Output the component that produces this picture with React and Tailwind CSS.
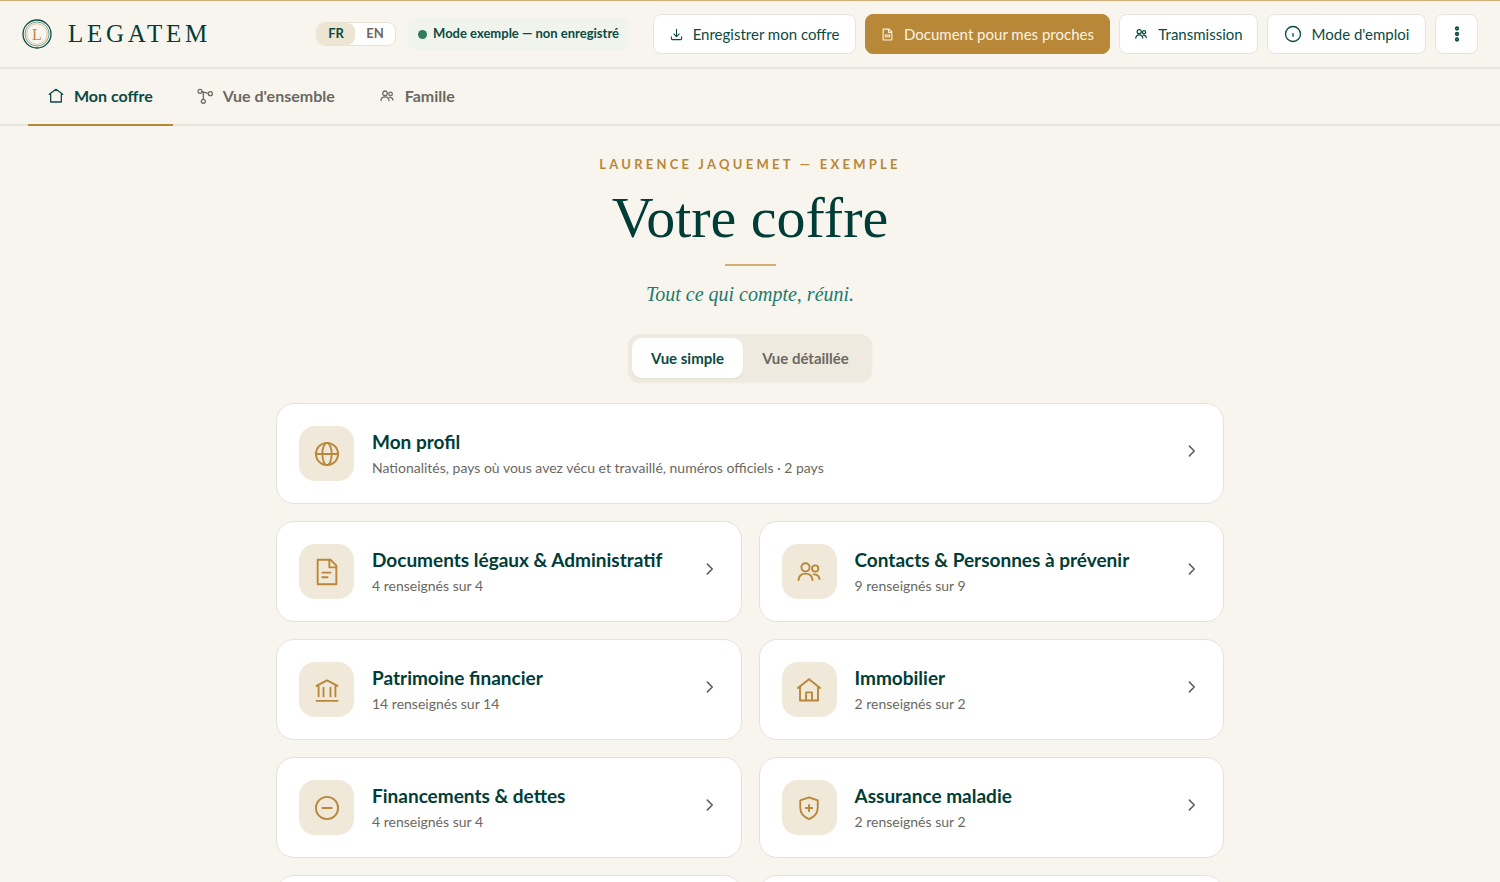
const Svg = ({ size = 28, sw = 1.6, children, className = "" }) => (
  <svg
    width={size}
    height={size}
    viewBox="0 0 24 24"
    fill="none"
    stroke="currentColor"
    strokeWidth={sw}
    strokeLinecap="round"
    strokeLinejoin="round"
    aria-hidden="true"
    className={`shrink-0 ${className}`}
  >
    {children}
  </svg>
);

const Globe = (p) => (
  <Svg {...p}>
    <circle cx="12" cy="12" r="9.5" />
    <ellipse cx="12" cy="12" rx="4" ry="9.5" />
    <path d="M2.5 12h19" />
  </Svg>
);
const Doc = (p) => (
  <Svg {...p}>
    <path d="M4 1.5h11l5 5v16H4z" />
    <path d="M14 1.500v6.500H20M8 12.500h7M8 16.500h4.500" />
  </Svg>
);
const People = (p) => (
  <Svg {...p}>
    <circle cx="9" cy="8" r="3.5" />
    <circle cx="17.3" cy="9" r="2.7" />
    <path d="M3 19c.4-3.8 2.8-5.6 6-5.6s5.6 1.800 6 5.600M16 14c3 0 4.600 1.600 5 4" />
  </Svg>
);
const House = (p) => (
  <Svg {...p}>
    <path d="M2.500 10.300 12 2.800l9.500 7.500M4.300 9V21h15.400V9M9.500 21v-7h5v7" />
  </Svg>
);
const Home = (p) => (
  <Svg {...p}>
    <path d="M2 9.500 12 2l10 7.500h-2V21H4V9.500z" />
  </Svg>
);
const Bank = (p) => (
  <Svg {...p}>
    <path d="M3 8.500 12 3.800l9 4.700M3 8.500h1.500M19.500 8.500H21M4.800 9v8.500M9 10v7.500M15 10v7.500M19.200 9v8.500M3 21.300h18" />
  </Svg>
);
const Minus = (p) => (
  <Svg {...p}>
    <circle cx="12" cy="12" r="9.500" />
    <path d="M8 12h8" />
  </Svg>
);
const Shield = (p) => (
  <Svg {...p}>
    <path d="M12 2.800 19.500 5.500v6c0 4.800-3.200 8.200-7.500 10-4.300-1.800-7.500-5.200-7.500-10v-6z" />
    <path d="M12 9.300v5.400M9.300 12h5.400" />
  </Svg>
);
const Nodes = (p) => (
  <Svg {...p}>
    <circle cx="4.500" cy="5" r="3" />
    <circle cx="20" cy="8.500" r="3" />
    <circle cx="9.500" cy="20" r="3" />
    <path d="M7.500 5.500 17 8M9.500 6.500V17" />
  </Svg>
);
const Download = (p) => (
  <Svg {...p}>
    <path d="M12 2.500v13M7 11l5 5 5-5M2.500 16v3.500a2 2 0 0 0 2 2h15a2 2 0 0 0 2-2V16" />
  </Svg>
);
const Info = (p) => (
  <Svg {...p}>
    <circle cx="12" cy="12" r="10" />
    <path d="M12 11.500v3.500" />
  </Svg>
);
const DocSmall = (p) => (
  <Svg {...p}>
    <path d="M4 2h11l5 5v15H4zM14 2v6h6" />
    <path d="M8 13h8v3H8z" />
  </Svg>
);
const Dots = () => (
  <svg width="16" height="18" viewBox="0 0 16 18" fill="none" stroke="currentColor" strokeWidth="1.700" aria-hidden="true">
    <circle cx="8" cy="3.500" r="1.300" />
    <circle cx="8" cy="9" r="1.300" />
    <circle cx="8" cy="14.500" r="1.300" />
  </svg>
);
const Chevron = () => (
  <Svg size={18} sw={2} className="mb-1.5 text-[#5c5c58]">
    <path d="m8.500 5.500 6.500 6.500-6.500 6.500" />
  </Svg>
);

function Seal() {
  return (
    <svg width="30" height="30" viewBox="0 0 30 30" fill="none" aria-hidden="true" className="shrink-0">
      <circle cx="15" cy="15" r="14" stroke="#0b4a42" strokeWidth="1.300" />
      <circle cx="15" cy="15" r="12" stroke="#5d9a8f" strokeWidth="0.900" />
      <circle cx="15" cy="15" r="10.300" stroke="#d9b98a" strokeWidth="0.800" />
      <text x="15" y="20.500" textAnchor="middle" fontSize="16" fill="#c08a3e" className="font-['Liberation_Serif',serif]">
        L
      </text>
    </svg>
  );
}

const ACTION =
  "flex h-10 items-center justify-center rounded-lg border text-[15px] whitespace-nowrap";
const LIGHT = "border-[#e6e4de] bg-white text-[#0b4a42]";

function Header() {
  return (
    <header className="flex h-[69px] items-center justify-between border-t border-b-2 border-t-[#d2b07a] border-b-[#e8e6e0] px-[22px]">
      <a href="#accueil" className="flex items-center gap-4 text-[#003d36]">
        <Seal />
        <span className="font-['Liberation_Serif',serif] text-[25px] leading-8 tracking-[0.15em]">LEGATEM</span>
      </a>
      <div className="flex items-center">
        <div className="flex h-6 overflow-hidden rounded-lg border border-[#e8e3d6] bg-white text-[13px] font-bold">
          <button type="button" className="w-[38px] rounded-lg bg-[#ece5d2] text-[#0b4a42]">FR</button>
          <button type="button" className="w-10 text-[#6b6862]">EN</button>
        </div>
        <p className="ml-3 flex h-8 items-center gap-1.5 rounded-lg bg-[#f1f4ec] px-2.5 text-[13px] font-bold whitespace-nowrap text-[#0b4a42]">
          <span className="size-[9px] rounded-full bg-[#2f7d5b]" />
          Mode exemple — non enregistré
        </p>
        <div className="ml-6 flex items-center gap-[9px]">
          <button type="button" className={`${ACTION} ${LIGHT} w-[203px] gap-2.5`}>
            <Download size={13} sw={2} />
            Enregistrer mon coffre
          </button>
          <button type="button" className={`${ACTION} w-[245px] gap-2.5 border-[#b88738] bg-[#b88738] text-[#fbf3e2]`}>
            <DocSmall size={13} sw={2} />
            Document pour mes proches
          </button>
          <button type="button" className={`${ACTION} ${LIGHT} w-[139px] gap-2.5`}>
            <People size={14} sw={2.200} />
            Transmission
          </button>
          <button type="button" className={`${ACTION} ${LIGHT} w-[159px] gap-2.5`}>
            <Info size={18} sw={1.800} />
            Mode d'emploi
          </button>
          <button type="button" aria-label="Plus d'options" className={`${ACTION} ${LIGHT} w-[43px]`}>
            <Dots />
          </button>
        </div>
      </div>
    </header>
  );
}

const TABS = [
  { label: "Mon coffre", Icon: Home, active: true },
  { label: "Vue d'ensemble", Icon: Nodes },
  { label: "Famille", Icon: People },
];

function Tabs() {
  return (
    <nav className="flex h-[57px] gap-1 border-b-2 border-[#e8e6e0] px-7">
      {TABS.map(({ label, Icon, active }) => (
        <a
          key={label}
          href={`#${label}`}
          className={`-mb-0.5 flex items-center gap-2.5 border-b-2 px-5 pb-0.5 text-base font-bold ${
            active ? "border-[#b88738] text-[#0b4a42]" : "border-transparent text-[#6b6862]"
          }`}
        >
          <Icon size={16} sw={1.900} />
          {label}
        </a>
      ))}
    </nav>
  );
}

function Card({ Icon, title, text, wide }) {
  return (
    <a
      href={`#${title}`}
      className={`flex h-[101px] items-center gap-[18px] rounded-[18px] border border-[#e4e2dc] bg-white pr-[22px] pl-[22px] ${wide ? "col-span-2" : ""}`}
    >
      <span className="flex size-[55px] shrink-0 items-center justify-center rounded-2xl bg-[#f0e8d8] text-[#b88738]">
        <Icon />
      </span>
      <span className="flex min-w-0 flex-1 flex-col">
        <span className="text-[19px] leading-7 font-bold text-[#003d36]">{title}</span>
        <span className="text-sm leading-6 text-[#6b6862]">{text}</span>
      </span>
      <Chevron />
    </a>
  );
}

const CARDS = [
  { Icon: Globe, title: "Mon profil", text: "Nationalités, pays où vous avez vécu et travaillé, numéros officiels · 2 pays", wide: true },
  { Icon: Doc, title: "Documents légaux & Administratif", text: "4 renseignés sur 4" },
  { Icon: People, title: "Contacts & Personnes à prévenir", text: "9 renseignés sur 9" },
  { Icon: Bank, title: "Patrimoine financier", text: "14 renseignés sur 14" },
  { Icon: House, title: "Immobilier", text: "2 renseignés sur 2" },
  { Icon: Minus, title: "Financements & dettes", text: "4 renseignés sur 4" },
  { Icon: Shield, title: "Assurance maladie", text: "2 renseignés sur 2" },
];

export default function App() {
  return (
    <div className="h-screen overflow-hidden bg-[#f8f5ee] font-[Lato,sans-serif]">
      <Header />
      <Tabs />
      <main className="mx-auto max-w-[948px] pt-7">
        <div className="flex flex-col items-center text-center">
          <p className="text-[13px] leading-5 font-bold tracking-[0.25em] text-[#b88738]">LAURENCE JAQUEMET — EXEMPLE</p>
          <h1 className="mt-2 font-['Liberation_Serif',serif] text-[58px] leading-[72px] text-[#003d36]">Votre coffre</h1>
          <div className="mt-2.5 h-0.5 w-[51px] bg-[#d2ac70]" />
          <p className="mt-3 font-['Liberation_Serif',serif] text-xl leading-8 text-[#1d7a6c] italic">Tout ce qui compte, réuni.</p>
          <div className="mt-6 flex h-12 rounded-xl bg-[#efeae0] p-1 text-[15px] font-bold shadow-xs">
            <button type="button" className="w-[111px] rounded-[10px] bg-white text-[#0b4a42] shadow-xs">Vue simple</button>
            <button type="button" className="w-[125px] text-[#6b6862]">Vue détaillée</button>
          </div>
        </div>
        <div className="mt-[21px] grid grid-cols-2 gap-[17px]">
          {CARDS.map((c) => (
            <Card key={c.title} {...c} />
          ))}
          <div className="h-[101px] rounded-[18px] border border-[#e4e2dc] bg-white" />
          <div className="h-[101px] rounded-[18px] border border-[#e4e2dc] bg-white" />
        </div>
      </main>
    </div>
  );
}
